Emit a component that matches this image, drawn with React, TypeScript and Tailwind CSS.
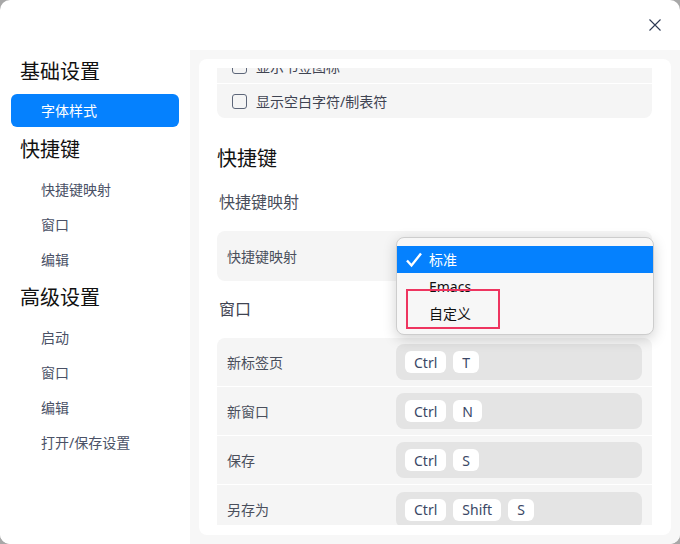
import React from "react";

const sections = [
  { title: "基础设置", items: ["字体样式"], active: 0 },
  { title: "快捷键", items: ["快捷键映射", "窗口", "编辑"], active: -1 },
  { title: "高级设置", items: ["启动", "窗口", "编辑", "打开/保存设置"], active: -1 },
];

const windowKeys: { label: string; keys: string[] }[] = [
  { label: "新标签页", keys: ["Ctrl", "T"] },
  { label: "新窗口", keys: ["Ctrl", "N"] },
  { label: "保存", keys: ["Ctrl", "S"] },
  { label: "另存为", keys: ["Ctrl", "Shift", "S"] },
];

function Sidebar() {
  return (
    <div className="w-[190px] shrink-0 bg-white pt-[7px]">
      {sections.map((section, si) => (
        <div key={si} className={si === 0 ? "" : si === 1 ? "mt-[8px]" : "mt-[6px]"}>
          <div className="flex h-[30px] items-center pl-[20px] text-[20px] text-[#111]">
            {section.title}
          </div>
          <div className="mt-[7px]">
            {section.items.map((item, i) =>
              section.active === i ? (
                <div
                  key={i}
                  className="mx-[11px] flex h-[33px] items-center rounded-md bg-[#0581fe] pl-[30px] text-[14px] text-white"
                >
                  {item}
                </div>
              ) : (
                <div
                  key={i}
                  className="flex h-[35px] items-center pl-[41px] text-[14px] text-[#4a5166]"
                >
                  {item}
                </div>
              ),
            )}
          </div>
        </div>
      ))}
    </div>
  );
}

function Checkbox() {
  return <div className="h-[15px] w-[15px] rounded-[3px] border-[1.5px] border-[#5d6679]" />;
}

function Key({ children }: { children: React.ReactNode }) {
  return (
    <div className="flex h-[22px] items-center rounded-md bg-white px-[9px] text-[14px] text-[#3a4766]">
      {children}
    </div>
  );
}

// open select menu, drawn over the card
function Dropdown() {
  return (
    <div className="absolute left-[197px] top-[178px] z-10 h-[98px] w-[258px] rounded-lg border border-[#cdcdcd] bg-[#f7f7f7] pt-[8px] shadow-[0_4px_14px_rgba(0,0,0,0.18)]">
      <div className="flex h-[27px] items-center bg-[#0581fe] text-[14px] text-white">
        <svg width="18" height="16" viewBox="0 0 18 16" className="ml-[8px] mr-[6px]">
          <path d="M2 8.5 L6.5 13.5 L16 1.5" fill="none" stroke="white" strokeWidth="2.4" />
        </svg>
        标准
      </div>
      <div className="flex h-[27px] items-center pl-[32px] text-[14px] text-[#111]">Emacs</div>
      <div className="flex h-[27px] items-center pl-[32px] text-[14px] text-[#111]">自定义</div>
      <div className="absolute left-[9px] top-[51px] h-[40px] w-[94px] border-2 border-[#ee3560]" />
    </div>
  );
}

function Content() {
  return (
    <div className="flex-1 bg-[#f7f7f7] p-[9px]">
      <div className="relative h-full rounded-lg bg-white pb-[10px] pl-[18px] pr-[19px] pt-[9px]">
        <div className="h-full overflow-hidden">
          <div className="-mt-[18px]">
            <div className="divide-y divide-white overflow-hidden rounded-lg bg-[#f5f5f5]">
              {["显示书签图标", "显示空白字符/制表符"].map((t, i) => (
                <div key={i} className="flex h-[34px] items-center gap-[9px] pl-[15px] text-[14px] text-[#3f4452]">
                  <Checkbox />
                  {t}
                </div>
              ))}
            </div>

            <div className="mt-[27px] flex h-[28px] items-center text-[20px] text-[#111]">快捷键</div>
            <div className="mt-[16px] flex h-[26px] items-center pl-[2px] text-[16px] text-[#4a4f5c]">
              快捷键映射
            </div>
            <div className="mt-[16px] flex h-[50px] items-center rounded-lg bg-[#f5f5f5] pl-[10px] text-[14px] text-[#4a4f5c]">
              快捷键映射
            </div>

            <div className="mt-[15px] flex h-[26px] items-center pl-[2px] text-[16px] text-[#3f4452]">窗口</div>
            <div className="mt-[16px] divide-y divide-white overflow-hidden rounded-t-lg bg-[#f5f5f5]">
              {windowKeys.map((row, i) => (
                <div key={i} className="flex h-[49px] items-center px-[10px]">
                  <div className="w-[169px] text-[14px] text-[#4a4f5c]">{row.label}</div>
                  <div className="flex h-[36px] flex-1 items-center gap-[7px] rounded-lg bg-[#e4e4e4] px-[9px]">
                    {row.keys.map((k, j) => (
                      <Key key={j}>{k}</Key>
                    ))}
                  </div>
                </div>
              ))}
            </div>
          </div>
        </div>
        <Dropdown />
      </div>
    </div>
  );
}

export default function App() {
  return (
    <div className="h-[544px] w-[680px] bg-[#a8a8a8] font-['Noto_Sans','Noto_Sans_CJK_SC',sans-serif]">
      <div className="flex h-full w-full flex-col overflow-hidden rounded-[10px] bg-white">
        <div className="flex h-[50px] shrink-0 items-center justify-end pr-[19px]">
          <svg width="12" height="12" viewBox="0 0 12 12">
            <path d="M0.5 0.5 L11.5 11.5 M11.5 0.5 L0.5 11.5" stroke="#2d3a55" strokeWidth="1.1" />
          </svg>
        </div>
        <div className="flex min-h-0 flex-1">
          <Sidebar />
          <Content />
        </div>
      </div>
    </div>
  );
}
